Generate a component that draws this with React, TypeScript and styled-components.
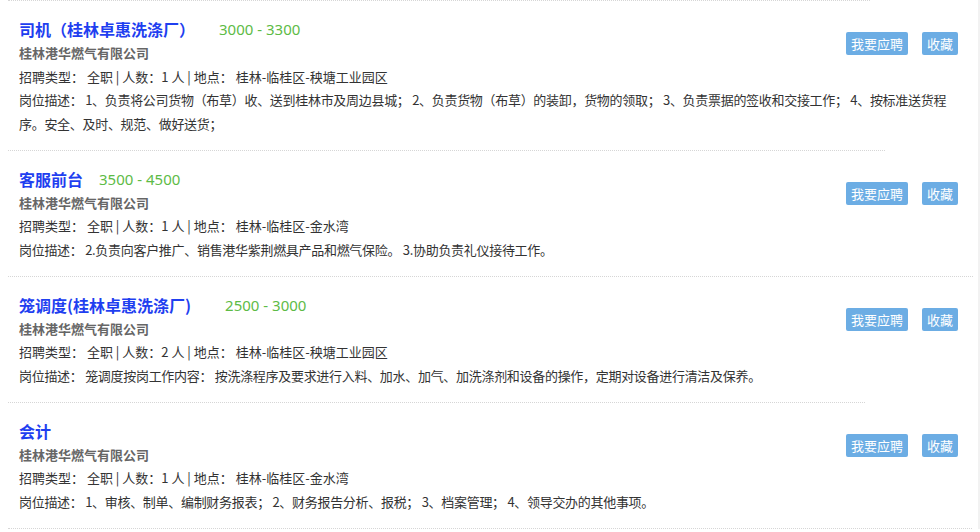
import React from 'react';
import styled, { createGlobalStyle } from 'styled-components';

const GlobalStyle = createGlobalStyle`
  html, body {
    margin: 0;
    padding: 0;
    background: #ffffff;
  }
  body {
    font-family: "Noto Sans CJK SC", "Noto Sans", sans-serif;
    color: #333;
  }
`;

type Job = {
  title: string;
  salary: string;
  gap: number;
  company: string;
  type: string;
  count: number;
  place: string;
  desc: string;
  line: number;
};

const jobs: Job[] = [
  {
    title: '司机（桂林卓惠洗涤厂）',
    salary: '3000 - 3300',
    gap: 24,
    company: '桂林港华燃气有限公司',
    type: '全职',
    count: 1,
    place: '桂林-临桂区-秧塘工业园区',
    desc: '1、负责将公司货物（布草）收、送到桂林市及周边县城； 2、负责货物（布草）的装卸，货物的领取； 3、负责票据的签收和交接工作； 4、按标准送货程序。安全、及时、规范、做好送货；',
    line: 862,
  },
  {
    title: '客服前台',
    salary: '3500 - 4500',
    gap: 16,
    company: '桂林港华燃气有限公司',
    type: '全职',
    count: 1,
    place: '桂林-临桂区-金水湾',
    desc: '2.负责向客户推广、销售港华紫荆燃具产品和燃气保险。 3.协助负责礼仪接待工作。',
    line: 877,
  },
  {
    title: '笼调度(桂林卓惠洗涤厂)',
    salary: '2500 - 3000',
    gap: 34,
    company: '桂林港华燃气有限公司',
    type: '全职',
    count: 2,
    place: '桂林-临桂区-秧塘工业园区',
    desc: '笼调度按岗工作内容： 按洗涤程序及要求进行入料、加水、加气、加洗涤剂和设备的操作，定期对设备进行清洁及保养。',
    line: 965,
  },
  {
    title: '会计',
    salary: '',
    gap: 16,
    company: '桂林港华燃气有限公司',
    type: '全职',
    count: 1,
    place: '桂林-临桂区-金水湾',
    desc: '1、审核、制单、编制财务报表； 2、财务报告分析、报税； 3、档案管理； 4、领导交办的其他事项。',
    line: 857,
  },
];

const List = styled.div`
  padding-left: 8px;
  width: 980px;
  border-right: 2px solid #f2f2f2;
  box-sizing: border-box;
`;

const Divider = styled.div<{ $width: number }>`
  width: ${(p) => p.$width}px;
  height: 0;
  border-top: 1px dotted #d6d6d6;
`;

const Item = styled.div`
  padding: 16px 20px 14.5px 11px;
`;

const Head = styled.div`
  display: flex;
  justify-content: space-between;
  align-items: flex-start;
`;

const TitleRow = styled.div`
  display: flex;
  align-items: center;
  height: 24px;
`;

const Title = styled.span`
  font-size: 16px;
  font-weight: 700;
  color: #1f3ff0;
`;

const Salary = styled.span<{ $gap: number }>`
  margin-left: ${(p) => p.$gap}px;
  font-family: "Noto Sans", sans-serif;
  font-size: 15px;
  color: #5dbb46;
`;

const Company = styled.div`
  font-size: 13px;
  font-weight: 700;
  color: #666;
  line-height: 23.5px;
`;

const Actions = styled.div`
  display: flex;
  gap: 14px;
  margin-top: 15px;
`;

const Button = styled.button`
  height: 23px;
  padding: 0 5px;
  border: none;
  border-radius: 2px;
  background: #6cade4;
  color: #fff;
  font-family: "Noto Sans CJK SC", sans-serif;
  font-size: 13px;
  line-height: 23px;
  cursor: pointer;
`;

const Line = styled.div`
  font-size: 13px;
  line-height: 23.5px;
  color: #333;
`;

const Desc = styled(Line)`
  letter-spacing: -0.3px;
`;

const JobItem = ({ job }: { job: Job }) => (
  <Item>
    <Head>
      <div>
        <TitleRow>
          <Title>{job.title}</Title>
          {job.salary && <Salary $gap={job.gap}>{job.salary}</Salary>}
        </TitleRow>
        <Company>{job.company}</Company>
      </div>
      <Actions>
        <Button>我要应聘</Button>
        <Button>收藏</Button>
      </Actions>
    </Head>
    <Line>
      招聘类型： {job.type} | 人数：{job.count} 人 | 地点： {job.place}
    </Line>
    <Desc>岗位描述： {job.desc}</Desc>
  </Item>
);

export default function App() {
  return (
    <>
      <GlobalStyle />
      <List>
        {jobs.map((job) => (
          <div key={job.title}>
            <Divider $width={job.line} />
            <JobItem job={job} />
          </div>
        ))}
        <Divider $width={964} />
      </List>
    </>
  );
}
